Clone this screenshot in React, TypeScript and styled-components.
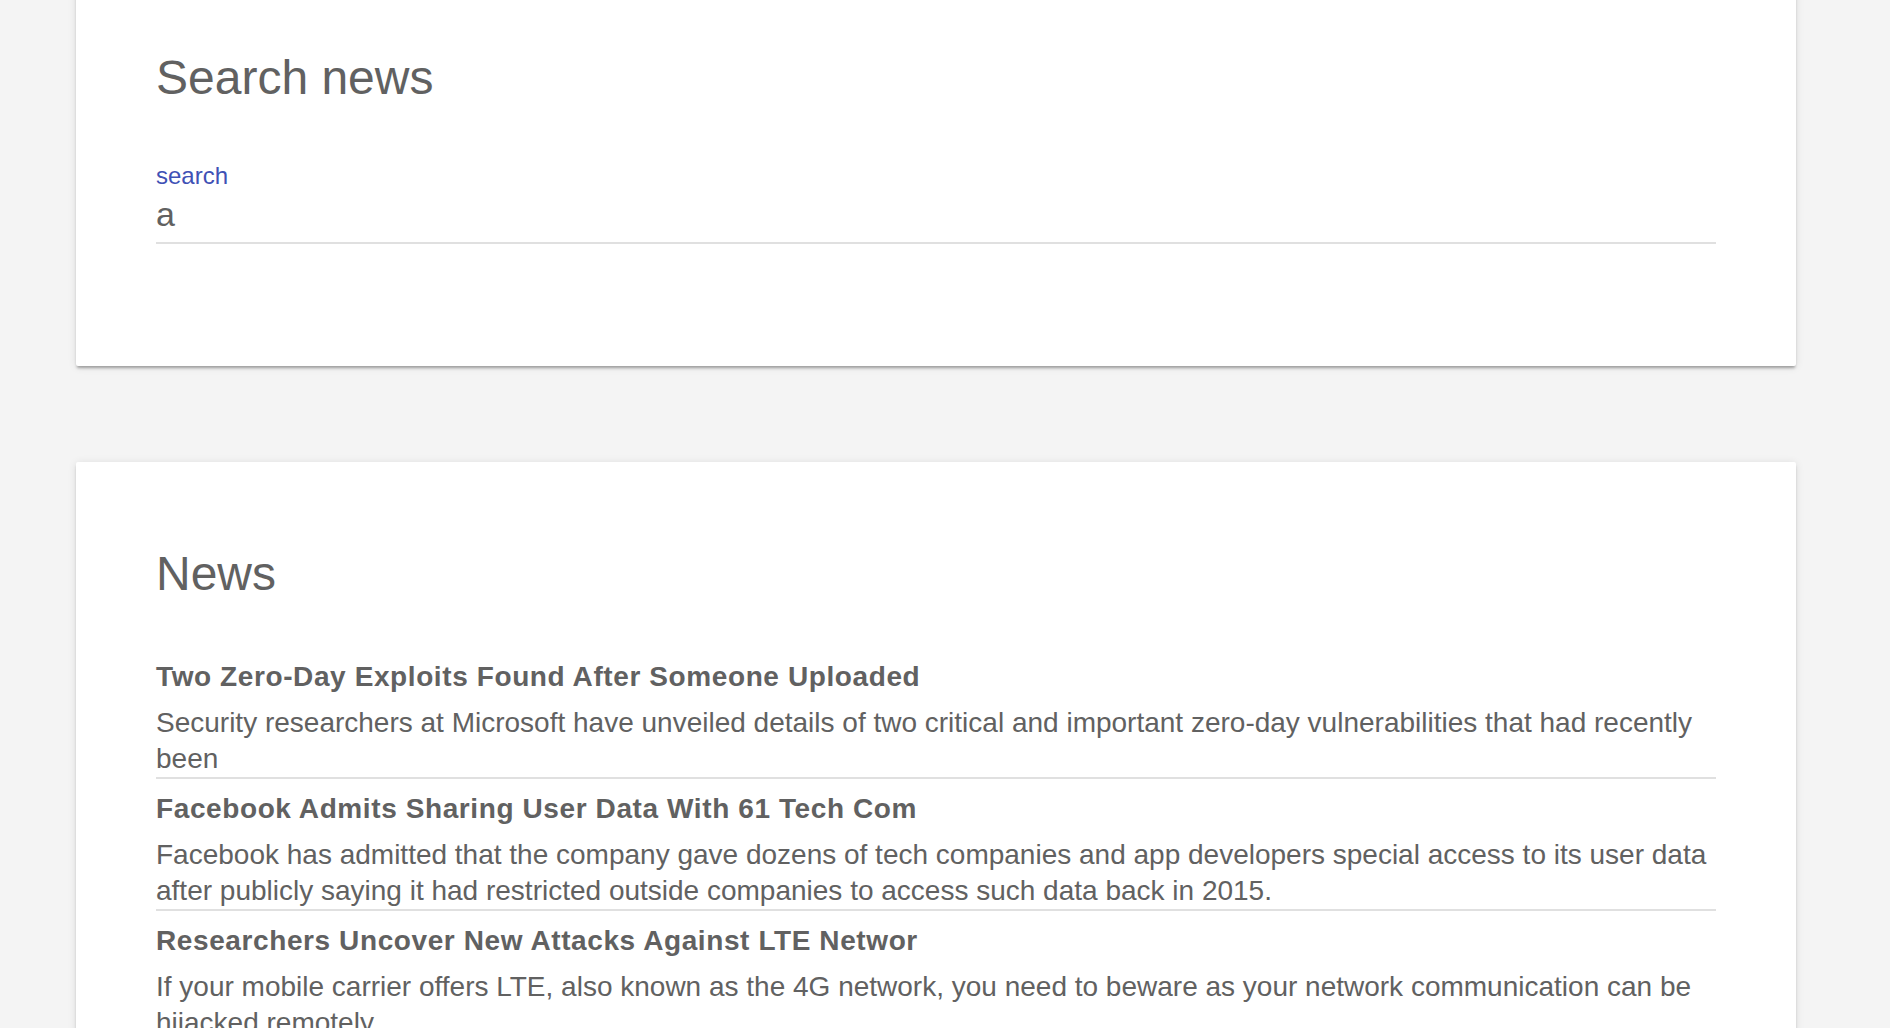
import React from "react";
import styled, { createGlobalStyle } from "styled-components";

const GlobalStyle = createGlobalStyle`
  html, body {
    margin: 0;
    padding: 0;
    background: #f4f4f4;
    font-family: "Liberation Sans", Arial, Helvetica, sans-serif;
    color: #616161;
  }
  * { box-sizing: border-box; }
`;

const Page = styled.div`
  display: flex;
  flex-direction: column;
  gap: 96px;
  margin-top: -34px;
  padding: 0 94px 80px 76px;
`;

const Card = styled.section`
  background: #ffffff;
  border-radius: 2px;
  padding: 80px;
  box-shadow: 0 3px 3px -1px rgba(0, 0, 0, 0.32), 0 1px 8px 0 rgba(0, 0, 0, 0.1);
  display: flex;
  flex-direction: column;
`;

const Heading = styled.h2<{ $gap: number }>`
  margin: 0 0 ${(p) => p.$gap}px;
  font-size: 48px;
  line-height: 64px;
  font-weight: 400;
  color: #616161;
`;

const Field = styled.label`
  display: flex;
  flex-direction: column;
  gap: 4px;
  margin-bottom: 42px;
`;

const FieldLabel = styled.span`
  font-size: 24px;
  line-height: 28px;
  color: #3f51b5;
`;

const Input = styled.input`
  font-family: "Liberation Sans", Arial, Helvetica, sans-serif;
  font-size: 34px;
  line-height: 40px;
  height: 50px;
  padding: 0 0 8px;
  margin: 0;
  color: #616161;
  border: none;
  border-bottom: 2px solid #e0e0e0;
  outline: none;
  background: transparent;
  width: 100%;
`;

const List = styled.ul`
  list-style: none;
  margin: 0;
  padding: 0;
  display: flex;
  flex-direction: column;
`;

const Item = styled.li`
  padding-top: 12px;
  border-bottom: 2px solid #e0e0e0;
  display: flex;
  flex-direction: column;
  gap: 10px;
`;

const Title = styled.h3`
  margin: 0;
  font-size: 28px;
  line-height: 36px;
  font-weight: 700;
  letter-spacing: 0.6px;
  color: #616161;
`;

const Desc = styled.p`
  margin: 0;
  font-size: 28px;
  line-height: 36px;
  color: #616161;
`;

const news = [
  {
    title: "Two Zero-Day Exploits Found After Someone Uploaded",
    desc: "Security researchers at Microsoft have unveiled details of two critical and important zero-day vulnerabilities that had recently been",
  },
  {
    title: "Facebook Admits Sharing User Data With 61 Tech Com",
    desc: "Facebook has admitted that the company gave dozens of tech companies and app developers special access to its user data after publicly saying it had restricted outside companies to access such data back in 2015.",
  },
  {
    title: "Researchers Uncover New Attacks Against LTE Networ",
    desc: "If your mobile carrier offers LTE, also known as the 4G network, you need to beware as your network communication can be hijacked remotely.",
  },
  {
    title: "Google Chrome to Block Auto-Redirects and Unwanted",
    desc: "Google is planning to add new security features to its Chrome browser to protect users from unwanted redirects and pop-ups.",
  },
];

export default function App() {
  return (
    <>
      <GlobalStyle />
      <Page>
        <Card>
          <Heading $gap={52}>Search news</Heading>
          <Field>
            <FieldLabel>search</FieldLabel>
            <Input defaultValue="a" />
          </Field>
        </Card>
        <Card>
          <Heading $gap={41}>News</Heading>
          <List>
            {news.map((n) => (
              <Item key={n.title}>
                <Title>{n.title}</Title>
                <Desc>{n.desc}</Desc>
              </Item>
            ))}
          </List>
        </Card>
      </Page>
    </>
  );
}
